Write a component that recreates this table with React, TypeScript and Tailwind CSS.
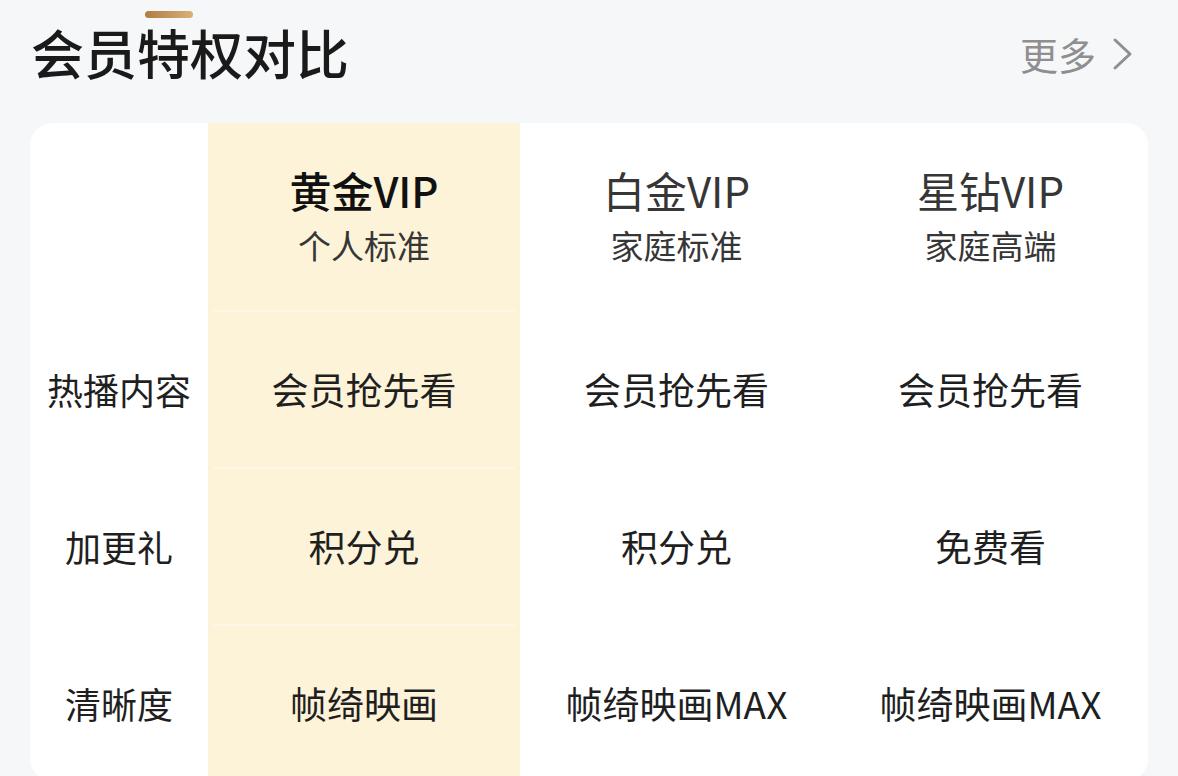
import React from "react";

const font = { fontFamily: '"Noto Sans CJK SC", "Noto Sans", sans-serif' };

interface Plan {
  name: string;
  tier: string;
  highlight?: boolean;
}

const plans: Plan[] = [
  { name: "黄金VIP", tier: "个人标准", highlight: true },
  { name: "白金VIP", tier: "家庭标准" },
  { name: "星钻VIP", tier: "家庭高端" },
];

const rows: { label: string; values: string[] }[] = [
  { label: "热播内容", values: ["会员抢先看", "会员抢先看", "会员抢先看"] },
  { label: "加更礼", values: ["积分兑", "积分兑", "免费看"] },
  { label: "清晰度", values: ["帧绮映画", "帧绮映画MAX", "帧绮映画MAX"] },
];

const App: React.FC = () => {
  return (
    <div className="min-h-screen bg-[#f6f7f9] px-[30px]" style={font}>
      <div className="flex items-start justify-between h-[123px] pt-[11px]">
        <div className="flex flex-col">
          <div className="ml-[115px] mb-[4px] h-[7px] w-[48px] rounded-full bg-gradient-to-r from-[#b07d43] to-[#d9b07a]" />
          <h1 className="text-[53px] leading-[60px] font-medium text-[#1a1a1a] pl-[1px]">会员特权对比</h1>
        </div>
        <button className="flex items-center gap-[16px] text-[#8f8f8f] pr-[14px] mt-[20px]">
          <span className="text-[38px] leading-[46px]">更多</span>
          <svg width="22" height="34" viewBox="0 0 22 34" fill="none" stroke="currentColor" strokeWidth="3" strokeLinecap="round" strokeLinejoin="round">
            <polyline points="3,3 18,17 3,31" />
          </svg>
        </button>
      </div>

      <div className="grid grid-cols-[178px_312px_313px_1fr] bg-white rounded-[22px] overflow-hidden">
        {/* header */}
        <div className="h-[187px]" />
        {plans.map((p) => (
          <div
            key={p.name}
            className={`h-[187px] flex flex-col items-center pt-[40px] ${p.highlight ? "bg-[#fdf3d9]" : ""}`}
          >
            <div className={`text-[42px] leading-[54px] ${p.highlight ? "text-[#111] font-medium" : "text-[#363636]"}`}>
              {p.name}
            </div>
            <div className="text-[33px] leading-[42px] mt-[7px] text-[#363636]">{p.tier}</div>
          </div>
        ))}

        {rows.map((r) => (
          <React.Fragment key={r.label}>
            <div className="h-[157px] flex items-center justify-center text-[36px] text-[#1f1f1f]">{r.label}</div>
            {r.values.map((v, i) => (
              <div key={i} className={`h-[157px] flex flex-col ${i === 0 ? "bg-[#fdf3d9]" : ""}`}>
                <div className={`mx-[6px] h-[2px] ${i === 0 ? "bg-[#fff8e8]" : ""}`} />
                <div className="flex-1 flex items-center justify-center text-[37px] text-[#1f1f1f]">{v}</div>
              </div>
            ))}
          </React.Fragment>
        ))}
      </div>
    </div>
  );
};

export default App;
